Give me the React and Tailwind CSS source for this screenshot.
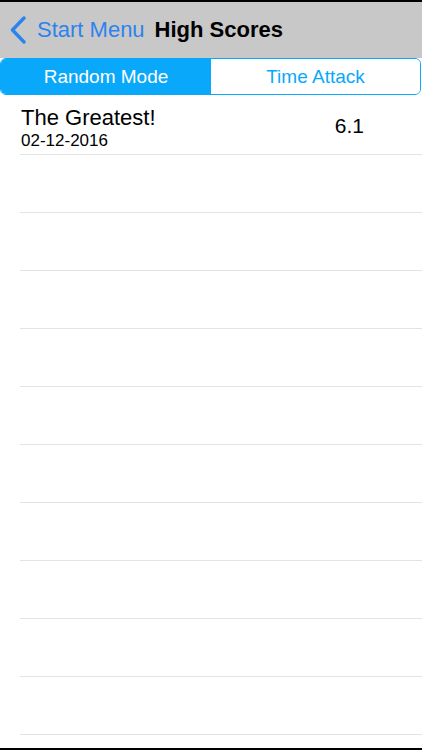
import React from 'react'

const rows = [
  { name: 'The Greatest!', date: '02-12-2016', score: '6.1' },
  null, null, null, null, null, null, null, null, null, null,
]

const ChevronLeft = () => (
  <svg width="17" height="28" viewBox="0 0 17 28" className="shrink-0">
    <path d="M14 2 L2.5 14 L14 26" fill="none" stroke="#2c83ee" strokeWidth="3.4" strokeLinecap="round" strokeLinejoin="round" />
  </svg>
)

const App = () => {
  return (
    <div className="w-[422px] h-[750px] bg-white flex flex-col overflow-hidden" style={{ fontFamily: '"Liberation Sans", Arial, sans-serif' }}>
      <div className="h-[2px] bg-black shrink-0" />
      <div className="h-[56px] bg-[#c8c8c8] flex items-center shrink-0">
        <div className="ml-[10px] flex items-center">
          <ChevronLeft />
          <span className="ml-[10px] text-[22px] leading-none text-[#2c83ee]">Start Menu</span>
        </div>
        <span className="ml-[10px] text-[22px] leading-none font-bold text-black">High Scores</span>
      </div>

      <div className="mr-px h-[37px] flex rounded-[6px] border border-[#0aa8fa] overflow-hidden shrink-0">
        <div className="w-[210px] bg-[#0aa8fa] flex items-center justify-center text-white text-[19px] leading-none">
          Random Mode
        </div>
        <div className="flex-1 bg-white flex items-center justify-center text-[#0aa8fa] text-[19px] leading-none">
          Time Attack
        </div>
      </div>

      <div className="pt-[2px] flex-1 flex flex-col">
        {rows.map((r, i) => (
          <div key={i} className="ml-[20px] h-[58px] border-b border-[#e3e3e3] flex justify-between shrink-0">
            {r && (
              <>
                <div className="pt-[10px] pl-px flex flex-col">
                  <span className="text-[22px] leading-none text-black">{r.name}</span>
                  <span className="mt-[3px] text-[17px] leading-none text-black">{r.date}</span>
                </div>
                <div className="pr-[58px] flex items-center text-[21px] leading-none text-black">{r.score}</div>
              </>
            )}
          </div>
        ))}
      </div>
      <div className="h-[2px] bg-black shrink-0" />
    </div>
  )
}

export default App
